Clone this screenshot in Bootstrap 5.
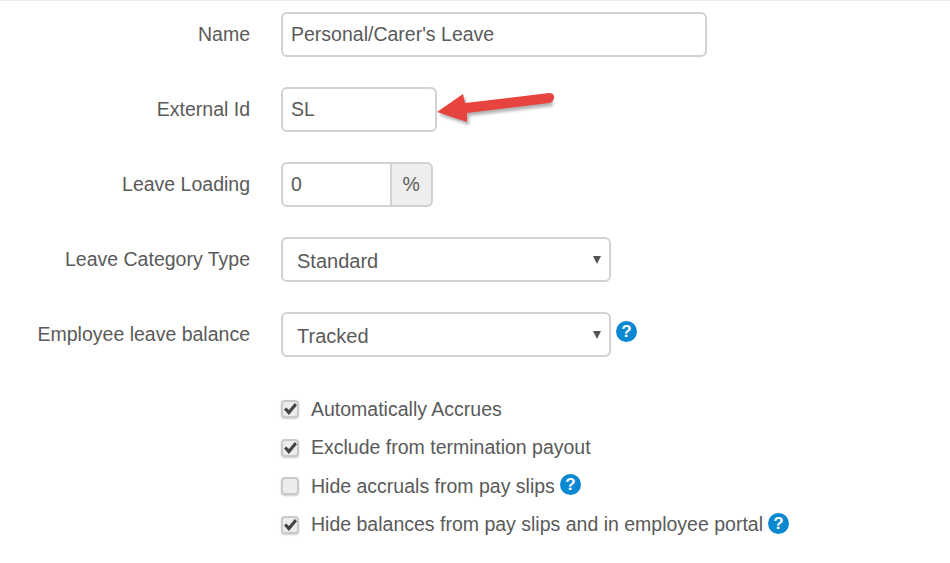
<!DOCTYPE html>
<html lang="en">
<head>
  <meta charset="UTF-8">
  <title>Leave Category</title>
  <meta name="viewport" content="width=device-width, initial-scale=1">
  <link href="https://cdn.jsdelivr.net/npm/bootstrap@5.3.3/dist/css/bootstrap.min.css" rel="stylesheet">
  <style>
    body {
      background: #fff;
      font-family: "Liberation Sans", Arial, sans-serif;
      font-size: 19.5px;
      color: #5a5a5a;
      border-top: 1px solid #eee;
      overflow: hidden;
    }
    .leave-form {
      position: relative;
      padding-top: 11px;
    }
    .field-row {
      display: flex;
      align-items: center;
      height: 45px;
      margin-bottom: 30px;
    }
    .field-label {
      width: 250px;
      margin: 0 31px 0 0;
      text-align: right;
      color: #5a5a5a;
    }
    .field-input.form-control,
    .field-input.form-select,
    .field-group .form-control,
    .field-group .input-group-text {
      height: 45px;
      font-size: 19.5px;
      color: #5a5a5a;
      border: 2px solid #d2d2d2;
      border-radius: 6px;
      padding: 0 8px;
      box-shadow: none;
    }
    .input-name { width: 426px; }
    .input-ext { width: 156px; }
    .field-group { width: 151.500px; flex-wrap: nowrap; }
    .field-group .form-control { width: 110px; flex: none; border-right-width: 1px; }
    .field-group .input-group-text {
      flex: 1;
      justify-content: center;
      background: #eee;
      padding: 0;
    }
    .field-input.form-select {
      width: 330px;
      padding: 2px 8px 0 14px;
      font-size: 20px;
      background-image: url("data:image/svg+xml,%3csvg xmlns='http://www.w3.org/2000/svg' viewBox='0 0 8 8'%3e%3cpath fill='%23555' d='M0 0h8L4 8z'/%3e%3c/svg%3e");
      background-size: 8px 8px;
      background-position: right 8px center;
    }
    .help-dot {
      display: inline-flex;
      align-items: center;
      justify-content: center;
      width: 21px;
      height: 21px;
      border-radius: 50%;
      background: #0a88d1;
      color: #fff;
      font-weight: 700;
      font-size: 17px;
      line-height: 1;
      flex: none;
    }
    .select-help { margin: -7px 0 0 5px; }
    .check-list {
      margin: 33px 0 0 281px;
    }
    .check-row {
      display: flex;
      align-items: center;
      height: 38.5px;
      gap: 11px;
    }
    .check-box {
      display: flex;
      align-items: center;
      justify-content: center;
      width: 18px;
      height: 18px;
      margin-right: 1px;
      flex: none;
      background: #ececec;
      border: 2px solid #cacaca;
      border-radius: 4px;
      box-shadow: 0 1px 2px rgba(0, 0, 0, .2);
    }
    .check-box svg { width: 13px; height: 12px; }
    .check-row .help-dot { margin: -3px 0 0 -6px; }
    .red-arrow {
      position: absolute;
      left: 436px;
      top: 85px;
      width: 124px;
      height: 44px;
    }
  </style>
</head>
<body>

  <form class="leave-form">
    <div class="field-row">
      <label class="field-label" for="leaveName">Name</label>
      <input class="form-control field-input input-name" id="leaveName" value="Personal/Carer's Leave">
    </div>
    <div class="field-row">
      <label class="field-label" for="externalId">External Id</label>
      <input class="form-control field-input input-ext" id="externalId" value="SL">
    </div>
    <div class="field-row">
      <label class="field-label" for="leaveLoading">Leave Loading</label>
      <div class="input-group field-group">
        <input class="form-control" id="leaveLoading" value="0">
        <span class="input-group-text">%</span>
      </div>
    </div>
    <div class="field-row">
      <label class="field-label" for="categoryType">Leave Category Type</label>
      <select class="form-select field-input" id="categoryType">
        <option>Standard</option>
      </select>
    </div>
    <div class="field-row">
      <label class="field-label" for="leaveBalance">Employee leave balance</label>
      <select class="form-select field-input" id="leaveBalance">
        <option>Tracked</option>
      </select>
      <span class="help-dot select-help">?</span>
    </div>

    <div class="check-list">
      <div class="check-row">
        <span class="check-box"><svg viewBox="0 0 12 11"><path fill="#444" d="M0 6l2-2 2.500 2.500L10 0l2 2-7.500 9z"/></svg></span>
        <span>Automatically Accrues</span>
      </div>
      <div class="check-row">
        <span class="check-box"><svg viewBox="0 0 12 11"><path fill="#444" d="M0 6l2-2 2.500 2.500L10 0l2 2-7.500 9z"/></svg></span>
        <span>Exclude from termination payout</span>
      </div>
      <div class="check-row">
        <span class="check-box"></span>
        <span>Hide accruals from pay slips</span>
        <span class="help-dot">?</span>
      </div>
      <div class="check-row">
        <span class="check-box"><svg viewBox="0 0 12 11"><path fill="#444" d="M0 6l2-2 2.500 2.500L10 0l2 2-7.500 9z"/></svg></span>
        <span>Hide balances from pay slips and in employee portal</span>
        <span class="help-dot">?</span>
      </div>
    </div>

    <!-- arrow pasted over the screenshot -->
    <svg class="red-arrow" viewBox="0 0 124 44">
      <defs><filter id="arrowBlur" x="-10%" y="-30%" width="120%" height="160%"><feGaussianBlur stdDeviation="1.500"/></filter></defs>
      <path fill="#000" opacity=".3" filter="url(#arrowBlur)" d="M3 29 L29 11 L31 20 L116 10 L117 20 L33 30 L33 39 Z"/>
      <path fill="#e8443f" d="M1 26 L27 8 L29 17 L113 7 Q118 7 118 11 Q118 16 113 17 L31 27 L31 36 Z"/>
    </svg>
  </form>

</body>
</html>
